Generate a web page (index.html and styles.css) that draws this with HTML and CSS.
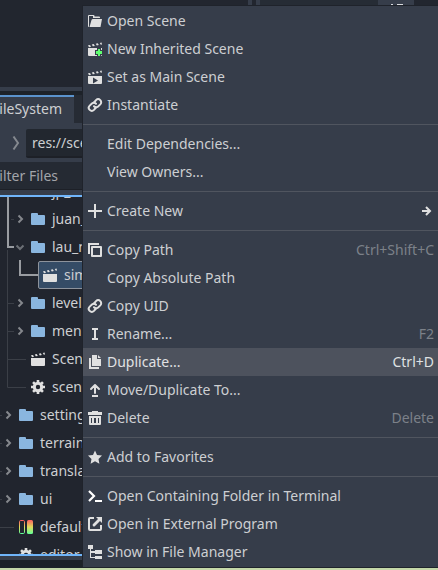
FILE: index.html
```html
<!DOCTYPE html>
<html lang="en">
<head>
<meta charset="utf-8">
<title>FileSystem</title>
<link rel="stylesheet" href="styles.css">
</head>
<body>
<svg class="defs" width="0" height="0">
  <defs>
    <linearGradient id="heat" x1="0" y1="0" x2="0" y2="1"><stop offset="0" stop-color="#ff5f5f"/><stop offset=".5" stop-color="#e1da5b"/><stop offset="1" stop-color="#5fff97"/></linearGradient>
    <symbol id="open" viewBox="0 0 16 16"><path d="M2 2a1 1 0 0 0-1 1v10.500A1.500 1.500 0 0 0 2 14V3h4v2h7V4.500a1 1 0 0 0-1-1H7.500V3a1 1 0 0 0-1-1z"/><path d="M6 6h9l-1.500 8H2.500L4.500 7A1.500 1.500 0 0 1 6 6z"/></symbol>
    <symbol id="clap" viewBox="0 0 16 16"><path d="M1 8h14v6a1 1 0 0 1-1 1H2a1 1 0 0 1-1-1z"/><path d="m1 4.300 2-.4 1 1.800-2 .5zm3.800-.8 2-.4 1 1.800-2 .4zm4-.8 2-.4 1 1.800-2 .4zm4-.8 1.800-.4.400 2-1.200.3zM1 7h14v1H1z"/></symbol>
    <symbol id="inherit" viewBox="0 0 16 16"><use href="#clap"/><path d="M10 7h4v2h2v5h-2v2h-4v-2H8V9h2z" fill="#363d4a"/><path d="M11 8h2v2h2v3h-2v2h-2v-2H9v-3h2z" fill="#5fff70"/></symbol>
    <symbol id="main" viewBox="0 0 16 16"><use href="#clap"/><path d="m6 8.500 5 3-5 3z" fill="#363d4a"/></symbol>
    <symbol id="link" viewBox="0 0 16 16"><g fill="none" stroke="#e0e0e0" stroke-width="2" stroke-linecap="round"><path d="m7 5.500 2-2.400a3 3 0 0 1 4.300 4.300l-2.200 2a3 3 0 0 1-4.100-.2"/><path d="m9 10.500-2 2.400a3 3 0 0 1-4.300-4.300l2.200-2a3 3 0 0 1 4.100.2"/></g></symbol>
    <symbol id="plus" viewBox="0 0 16 16"><path d="M7 1h2v6h6v2H9v6H7V9H1V7h6z"/></symbol>
    <symbol id="copy" viewBox="0 0 16 16"><path d="M1 1h11v2H3v9H1z"/><path d="M4 5a1 1 0 0 1 1-1h9a1 1 0 0 1 1 1v9a1 1 0 0 1-1 1H5a1 1 0 0 1-1-1zm2 1v7h7V6z" fill-rule="evenodd"/></symbol>
    <symbol id="rename" viewBox="0 0 16 16"><path d="M5 2h6v2H9v8h2v2H5v-2h2V4H5z"/></symbol>
    <symbol id="dup" viewBox="0 0 16 16"><path d="M5 1h5v4h4v7H5zM11 1l3 3h-3zM2 4h2v9h8v2H2z"/></symbol>
    <symbol id="up" viewBox="0 0 16 16"><path d="M8 3v8M4 7l4-4 4 4" fill="none" stroke="#e0e0e0" stroke-width="2" stroke-linecap="round" stroke-linejoin="round"/><path d="M5 13h6v2H5z"/></symbol>
    <symbol id="trash" viewBox="0 0 16 16"><path d="M5 1h6v1h4v3H1V2h4zM2 6h12v8a1 1 0 0 1-1 1H3a1 1 0 0 1-1-1zm2 2v5h1V8zm3 0v5h2V8zm4 0v5h1V8z" fill-rule="evenodd"/></symbol>
    <symbol id="star" viewBox="0 0 16 16"><path d="m8 1.500 2 4.400 5 .5-3.500 3.500.9 4.800L8 12.200l-4.400 2.500.9-4.800L1 6.400l5-.5z"/></symbol>
    <symbol id="term" viewBox="0 0 16 16"><path d="m2 3 5 5-5 5" fill="none" stroke="#fff" stroke-width="2.200"/><path d="M8 12h7v2H8z" fill="#fff"/></symbol>
    <symbol id="ext" viewBox="0 0 16 16"><path d="M7 1H3a2 2 0 0 0-2 2v10a2 2 0 0 0 2 2h10a2 2 0 0 0 2-2V9h-2v4H3V3h4z"/><path d="M9 1h6v6l-2-2-5 5a1.300 1.300 0 0 1-2-2l5-5z"/></symbol>
    <symbol id="files" viewBox="0 0 16 16"><path d="M1 1h5v4H4v2h4V6h7v4H8V9H4v4h4v-1h7v3H8v-1H3V5H1z"/></symbol>
    <symbol id="folder" viewBox="0 0 16 16"><path d="M1 3a1 1 0 0 1 1-1h5a1 1 0 0 1 1 1v1h6a1 1 0 0 1 1 1v8a1 1 0 0 1-1 1H2a1 1 0 0 1-1-1z" fill="#8ab6df"/></symbol>
    <symbol id="gear" viewBox="0 0 16 16"><circle cx="8" cy="8" r="3.700" fill="none" stroke="#e0e0e0" stroke-width="3"/><path d="M8 1v3m0 8v3M1 8h3m8 0h3M3.050 3.050l2 2m5.900 5.900 2 2m0-9.900-2 2m-5.900 5.900-2 2" fill="none" stroke="#e0e0e0" stroke-width="2.600"/></symbol>
    <symbol id="bars" viewBox="0 0 16 16"><rect x="1.500" y="1.500" width="5" height="13" rx="1.200" fill="none" stroke="url(#heat)"/><rect x="9" y="1" width="6" height="14" rx="1.500" fill="url(#heat)"/></symbol>
    <symbol id="right" viewBox="0 0 16 16"><path d="m6.500 4.500 3.500 3.500-3.500 3.500" fill="none" stroke="#85888d" stroke-width="2"/></symbol>
    <symbol id="down" viewBox="0 0 16 16"><path d="m4.500 6.500 3.500 3.500 3.500-3.500" fill="none" stroke="#6c7076" stroke-width="2"/></symbol>
    <symbol id="arrow" viewBox="0 0 16 16"><path d="M4 8h8M8 4l4 4-4 4" fill="none" stroke="#e0e0e0" stroke-width="2"/></symbol>
  </defs>
</svg>
<div class="editor">
  <div class="view"><div class="strip"><i class="s1"></i><i class="s2"></i><i class="s3"></i><i class="s4"><b></b><b></b></i></div></div>
  <div class="split"></div>
  <div class="tabs"><div class="tab">FileSystem</div></div>
  <div class="path"><svg width="8" height="16" viewBox="0 0 8 16"><path d="M1.500 1.500 6 8l-4.500 6.500" fill="none" stroke="#85898f" stroke-width="2"/></svg><div class="field">res://scenes</div></div>
  <div class="filter"><span>Filter Files</span></div>
  <div class="tree">
    <svg class="lines" width="82" height="357">
      <path d="M8 0v50h6M20 63v15h18" fill="none" stroke="#999ca1" stroke-width="2"/>
      <path d="M7.500 53v137.500H26M7.500 106.500H14M7.500 134.500H14M7.500 162.500H26M11 22.500h3M0 218.500h2M0 246.500h2M0 274.500h2M0 302.500h2M0 330.500h14" fill="none" stroke="#3b3f47"/>
    </svg>
    <div class="rows">
      <div class="node d2"><svg><use href="#right"/></svg><svg><use href="#folder"/></svg><span>jp_1</span></div>
      <div class="node d2"><svg><use href="#right"/></svg><svg><use href="#folder"/></svg><span>juan_</span></div>
      <div class="node d2"><svg><use href="#down"/></svg><svg><use href="#folder"/></svg><span>lau_m</span></div>
      <div class="node picked"><svg><use href="#clap"/></svg><span>simple</span></div>
      <div class="node d2"><svg><use href="#right"/></svg><svg><use href="#folder"/></svg><span>levels</span></div>
      <div class="node d2"><svg><use href="#right"/></svg><svg><use href="#folder"/></svg><span>menu</span></div>
      <div class="node d2 leaf"><svg><use href="#clap"/></svg><span>Scene</span></div>
      <div class="node d2 leaf"><svg><use href="#gear"/></svg><span>scene</span></div>
      <div class="node d1"><svg><use href="#right"/></svg><svg><use href="#folder"/></svg><span>settings</span></div>
      <div class="node d1"><svg><use href="#right"/></svg><svg><use href="#folder"/></svg><span>terrain</span></div>
      <div class="node d1"><svg><use href="#right"/></svg><svg><use href="#folder"/></svg><span>translations</span></div>
      <div class="node d1"><svg><use href="#right"/></svg><svg><use href="#folder"/></svg><span>ui</span></div>
      <div class="node d1 leaf"><svg><use href="#bars"/></svg><span>default</span></div>
      <div class="node d1 leaf"><svg><use href="#gear"/></svg><span>editor</span></div>
    </div>
  </div>
  <div class="foot"></div>
  <div class="status"></div>
</div>
<div class="menu">
  <div class="item"><svg><use href="#open"/></svg><span>Open Scene</span></div>
  <div class="item"><svg><use href="#inherit"/></svg><span>New Inherited Scene</span></div>
  <div class="item"><svg><use href="#main"/></svg><span>Set as Main Scene</span></div>
  <div class="item"><svg><use href="#link"/></svg><span>Instantiate</span></div>
  <hr>
  <div class="item"><svg></svg><span>Edit Dependencies...</span></div>
  <div class="item"><svg></svg><span>View Owners...</span></div>
  <hr>
  <div class="item"><svg><use href="#plus"/></svg><span>Create New</span><svg class="sub"><use href="#arrow"/></svg></div>
  <hr>
  <div class="item"><svg><use href="#copy"/></svg><span>Copy Path</span><kbd>Ctrl+Shift+C</kbd></div>
  <div class="item"><svg></svg><span>Copy Absolute Path</span></div>
  <div class="item"><svg><use href="#link"/></svg><span>Copy UID</span></div>
  <div class="item"><svg><use href="#rename"/></svg><span>Rename...</span><kbd>F2</kbd></div>
  <div class="item hover"><svg><use href="#dup"/></svg><span>Duplicate...</span><kbd>Ctrl+D</kbd></div>
  <div class="item"><svg><use href="#up"/></svg><span>Move/Duplicate To...</span></div>
  <div class="item"><svg><use href="#trash"/></svg><span>Delete</span><kbd>Delete</kbd></div>
  <hr>
  <div class="item"><svg><use href="#star"/></svg><span>Add to Favorites</span></div>
  <hr>
  <div class="item"><svg><use href="#term"/></svg><span>Open Containing Folder in Terminal</span></div>
  <div class="item"><svg><use href="#ext"/></svg><span>Open in External Program</span></div>
  <div class="item"><svg><use href="#files"/></svg><span>Show in File Manager</span></div>
</div>
</body>
</html>
```
FILE: styles.css
```css
* { box-sizing: border-box; }
body { margin: 0; width: 438px; height: 570px; overflow: hidden; position: relative; background: #1d2229; color: #cdcfd2; font: 14px/28px "Noto Sans", sans-serif; white-space: nowrap; }
.defs { position: absolute; }
svg { flex: none; fill: #e0e0e0; }
.editor { display: flex; flex-direction: column; height: 570px; }
.view { height: 87px; background: #22262f; }
.strip { display: flex; height: 5px; padding-left: 248px; }
.strip i { height: 5px; background: #363d4a; }
.s1 { width: 4px; }
.s2 { width: 4px; margin-left: 4px; }
.strip .s3 { width: 118px; background: #262c35; }
.s4 { width: 36px; display: flex; align-items: flex-end; padding-left: 13px; gap: 4px; }
.s4 b { width: 6px; height: 1px; background: #d8dade; }
.s4 b:first-child { width: 2px; }
.split { height: 4px; background: #363d4a; }
.tabs { height: 28px; margin-top: 4px; background: #262b34; display: flex; }
.tab { width: 74px; border-top: 2px solid #5b93cd; background: #363d4a; display: flex; justify-content: flex-end; padding-right: 12px; line-height: 24px; }
.path { height: 39px; padding: 6px 0 5px 12px; background: #363d4a; display: flex; align-items: center; gap: 6px; }
.field { height: 29px; width: 60px; padding-left: 6px; background: #22272f; border-bottom: 2px solid #1d2027; border-radius: 2px; line-height: 28px; }
.filter { height: 33px; width: 82px; background: #363d4a; display: flex; }
.filter span { height: 28px; width: 82px; display: flex; justify-content: flex-end; padding-right: 24px; background: #252a33; color: #a2a5aa; border-bottom: 1px solid #1d2027; }
.tree { height: 361px; background: #21252e; border-top: 2px solid #70b5fa; border-bottom: 2px solid #70b5fa; overflow: hidden; position: relative; }
.lines { position: absolute; left: 0; top: 0; }
.rows { position: relative; margin-top: -20px; }
.node { height: 28px; display: flex; align-items: center; }
.node svg, .item svg { width: 16px; height: 16px; }
.node span { margin-left: 4px; }
.d1 { gap: 2px; }
.d2 { gap: 2px; padding-left: 12px; }
.leaf.d1 { padding-left: 18px; }
.leaf.d2 { padding-left: 30px; }
.picked { margin-left: 38px; padding-left: 3px; gap: 2px; background: #354c66; border: 1px solid #8d939c; border-radius: 2px; }
.foot { height: 4px; background: #363d4a; }
.status { height: 10px; border-bottom: 2px solid #c5d8a9; }
.menu { position: absolute; left: 82px; top: 5px; width: 356px; height: 563px; padding-top: 1px; background: #363d4a; border: 1px solid #1f232b; border-right: 0; }
.item { height: 28px; padding: 0 4px; display: flex; align-items: center; gap: 4px; }
.item kbd, .item .sub { margin-left: auto; font: inherit; color: #7c8189; }
.hover { background: #4d525d; color: #e0e1e3; }
.hover kbd { color: #dfe1e3; }
hr { height: 1px; margin: 5px 0; border: 0; background: #50555f; }
```
